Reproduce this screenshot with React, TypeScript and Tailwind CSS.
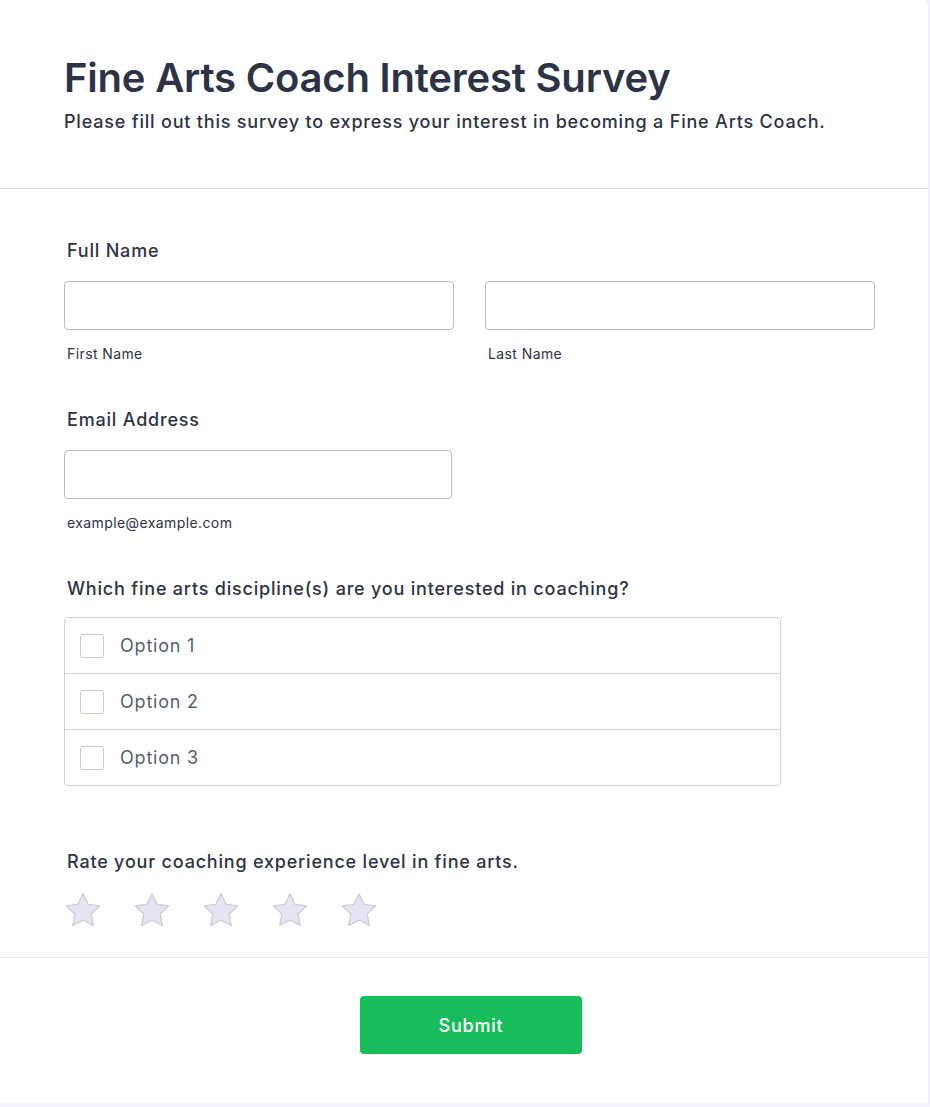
import React from 'react';

const font = { fontFamily: 'Inter, "Noto Sans", sans-serif' };

function Star() {
  return (
    <svg width="38" height="36" viewBox="0 0 38 36" className="shrink-0">
      <path
        d="M19 1.8l5.1 10.6 11.6 1.5-8.5 8.1 2.1 11.5L19 28l-10.3 5.5 2.1-11.5-8.5-8.1 11.6-1.5z"
        fill="#e3e5f1"
        stroke="#c9cddb"
        strokeWidth="1.3"
        strokeLinejoin="round"
      />
    </svg>
  );
}

function TextInput({ width }: { width: string }) {
  return (
    <input
      type="text"
      className={`${width} h-[49px] rounded-[4px] border border-[#b8bdc9] bg-white px-3 text-[16px] text-[#2c3345] outline-none`}
    />
  );
}

const labelCls = 'block pl-[3px] text-[18px] leading-[24px] font-medium tracking-[0.8px] text-[#2c3345]';
const subCls = 'mt-[14px] pl-[3px] text-[14px] leading-[20px] tracking-[0.4px] text-[#2c3345]';

export default function App() {
  const options = ['Option 1', 'Option 2', 'Option 3'];

  return (
    <div className="min-h-screen bg-[#f3f3fe]" style={font}>
      <div className="w-[929px] bg-white rounded-tr-[6px] border-r border-[#ececf3]">
        {/* Header */}
        <div className="px-16 pt-[54px] pb-[53px] border-b border-[#dadaea]">
          <h1 className="text-[40px] leading-[48px] font-semibold text-[#2c3345] tracking-[-0.2px]">
            Fine Arts Coach Interest Survey
          </h1>
          <p className="mt-[6px] text-[18px] leading-[27px] font-medium tracking-[0.8px] text-[#2c3345]">
            Please fill out this survey to express your interest in becoming a Fine Arts Coach.
          </p>
        </div>

        {/* Fields */}
        <div className="px-16 pt-[50px]">
          <label className={labelCls}>Full Name</label>
          <div className="mt-[18px] flex gap-[31px]">
            <div className="flex flex-col">
              <TextInput width="w-[390px]" />
              <span className={subCls}>First Name</span>
            </div>
            <div className="flex flex-col">
              <TextInput width="w-[390px]" />
              <span className={subCls}>Last Name</span>
            </div>
          </div>

          <label className={`mt-[44px] ${labelCls}`}>Email Address</label>
          <div className="mt-[18px] flex flex-col">
            <TextInput width="w-[388px]" />
            <span className={subCls}>example@example.com</span>
          </div>

          <label className={`mt-[44px] ${labelCls}`}>
            Which fine arts discipline(s) are you interested in coaching?
          </label>
          <div className="mt-[16px] w-[717px] rounded-[4px] border border-[#cfd2d8] overflow-hidden">
            {options.map((o, i) => (
              <div
                key={o}
                className={`flex items-center pl-[15px] ${i > 0 ? 'h-[56px] border-t border-[#cfd2d8]' : 'h-[55px]'}`}
              >
                <span className="w-6 h-6 rounded-[3px] border border-[#c3cad8] bg-white" />
                <span className="ml-4 text-[18px] tracking-[0.8px] text-[#545f6f]">{o}</span>
              </div>
            ))}
          </div>

          <label className={`mt-[64px] ${labelCls}`}>
            Rate your coaching experience level in fine arts.
          </label>
          <div className="mt-[18px] flex gap-[31px] pb-[29px]">
            {[0, 1, 2, 3, 4].map((s) => (
              <Star key={s} />
            ))}
          </div>
        </div>

        {/* Footer */}
        <div className="border-t border-[#e6e6ef] flex justify-center pl-[14px] pt-[38px] pb-[49px]">
          <button className="w-[222px] h-[58px] rounded-[4px] bg-[#18bd5b] text-white text-[18px] font-medium tracking-[0.8px]">
            Submit
          </button>
        </div>
      </div>
    </div>
  );
}
